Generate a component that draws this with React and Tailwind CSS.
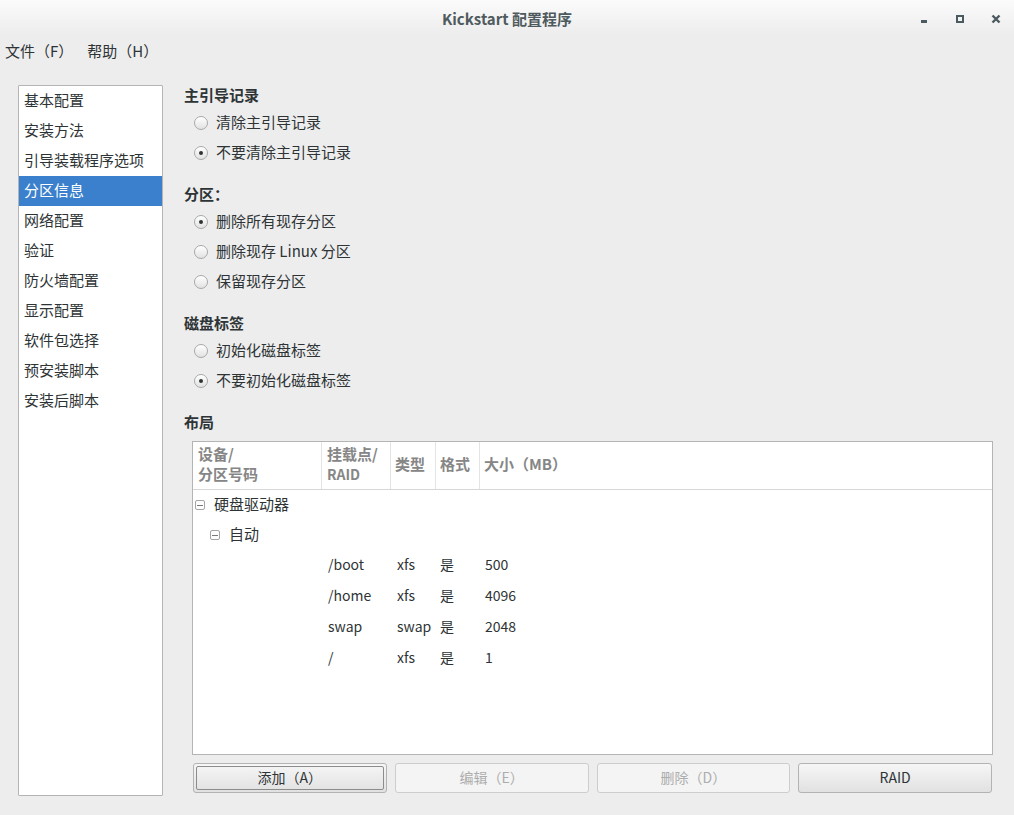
import React from 'react';

const cjk = { fontFamily: '"Noto Sans CJK SC", "Noto Sans", sans-serif' };

const navItems = [
  '基本配置',
  '安装方法',
  '引导装载程序选项',
  '分区信息',
  '网络配置',
  '验证',
  '防火墙配置',
  '显示配置',
  '软件包选择',
  '预安装脚本',
  '安装后脚本',
];

const partitions = [
  { mount: '/boot', type: 'xfs', format: '是', size: '500' },
  { mount: '/home', type: 'xfs', format: '是', size: '4096' },
  { mount: 'swap', type: 'swap', format: '是', size: '2048' },
  { mount: '/', type: 'xfs', format: '是', size: '1' },
];

function Radio({ checked, label }) {
  return (
    <div className="h-[30px] flex items-center pl-[10px]">
      <span className="w-[14px] h-[14px] rounded-full border border-[#a8a8a8] bg-gradient-to-b from-white to-[#e2e2e2] flex items-center justify-center shadow-[inset_0_1px_0_#fff]">
        {checked && <span className="w-[4px] h-[4px] rounded-full bg-[#2e3436]" />}
      </span>
      <span className="ml-[8px] pb-[4px] text-[15px] leading-none text-[#2e3436]">{label}</span>
    </div>
  );
}

function Heading({ children, className = '' }) {
  return (
    <div className={`h-[23px] pb-[4px] flex items-center text-[15px] font-bold leading-none text-[#2e3436] ${className}`}>
      {children}
    </div>
  );
}

function Expander() {
  return (
    <span className="w-[10px] h-[10px] border border-[#a6a6a6] rounded-[2px] flex items-center justify-center bg-white">
      <span className="w-[6px] h-px bg-[#7a7a7a]" />
    </span>
  );
}

function Button({ children, disabled, focused }) {
  return (
    <div
      className={`h-[30px] rounded-[3px] border flex items-center justify-center p-[2px] ${
        disabled
          ? 'border-[#cdcdcd] bg-[#f4f4f4] text-[#adadad]'
          : 'border-[#b3b3b3] bg-gradient-to-b from-[#f6f6f6] to-[#e1e1e1] text-[#2e3436]'
      }`}
    >
      <div
        className={`w-full h-full flex items-center justify-center pb-[3px] text-[14px] leading-none ${
          focused ? 'border border-[#8c8c8c] rounded-[2px]' : ''
        }`}
      >
        {children}
      </div>
    </div>
  );
}

export default function App() {
  return (
    <div className="w-[1014px] h-[815px] bg-[#ededed] flex flex-col overflow-hidden" style={cjk}>
      {/* Title bar */}
      <div className="h-[37px] shrink-0 bg-gradient-to-b from-[#fbfbfb] to-[#ececec] relative flex items-center justify-center">
        <span className="text-[15px] font-bold text-[#4f5a5e] leading-none">Kickstart 配置程序</span>
        <div className="absolute right-0 top-0 h-full flex items-center">
          <div className="w-[36px] h-full flex items-center justify-center">
            <span className="w-[6px] h-[3px] bg-[#4b5a61] mt-[6px]" />
          </div>
          <div className="w-[36px] h-full flex items-center justify-center">
            <span className="w-[8px] h-[8px] border-2 border-[#4b5a61]" />
          </div>
          <div className="w-[36px] h-full flex items-center justify-center">
            <svg width="10" height="10" viewBox="0 0 10 10">
              <path d="M1.5 1.5 L8.5 8.5 M8.5 1.5 L1.5 8.5" stroke="#4b5a61" strokeWidth="2.4" />
            </svg>
          </div>
        </div>
      </div>

      {/* Menu bar */}
      <div className="h-[30px] shrink-0 pb-[4px] flex items-center text-[15px] leading-none text-[#2e3436]">
        <span className="pl-[5px]">文件（F）</span>
        <span className="ml-[14px]">帮助（H）</span>
      </div>

      {/* Body */}
      <div className="flex flex-1 pt-[18px] pb-[19px] pl-[18px] pr-[21px]">
        {/* Sidebar */}
        <div className="w-[145px] shrink-0 bg-white border border-[#b4b4b4] rounded-[1px] flex flex-col">
          {navItems.map((item) => (
            <div
              key={item}
              className={`h-[30px] shrink-0 flex items-center pl-[5px] pb-[4px] text-[15px] leading-none ${
                item === '分区信息' ? 'bg-[#3b80cc] text-white' : 'text-[#2e3436]'
              }`}
            >
              {item}
            </div>
          ))}
        </div>

        {/* Content */}
        <div className="flex-1 ml-[21px] flex flex-col">
          <Heading>主引导记录</Heading>
          <Radio label="清除主引导记录" />
          <Radio checked label="不要清除主引导记录" />

          <Heading className="mt-[16px]">分区：</Heading>
          <Radio checked label="删除所有现存分区" />
          <Radio label="删除现存 Linux 分区" />
          <Radio label="保留现存分区" />

          <Heading className="mt-[16px]">磁盘标签</Heading>
          <Radio label="初始化磁盘标签" />
          <Radio checked label="不要初始化磁盘标签" />

          <Heading className="mt-[16px]">布局</Heading>

          {/* Partition table */}
          <div className="mt-[6px] ml-[8px] h-[314px] bg-white border border-[#b4b4b4] flex flex-col">
            <div className="h-[48px] shrink-0 flex border-b border-[#d6d6d6] text-[15px] font-bold text-[#868686] leading-[20px]">
              <div className="w-[129px] border-r border-[#e4e4e4] pl-[5px] pb-[3px] flex flex-col justify-center">
                <span>设备/</span>
                <span>分区号码</span>
              </div>
              <div className="w-[69px] border-r border-[#e4e4e4] pl-[5px] pb-[3px] flex flex-col justify-center">
                <span>挂载点/</span>
                <span className="text-[14px]">RAID</span>
              </div>
              <div className="w-[45px] border-r border-[#e4e4e4] pl-[4px] pb-[3px] flex items-center">类型</div>
              <div className="w-[44px] border-r border-[#e4e4e4] pl-[4px] pb-[3px] flex items-center">格式</div>
              <div className="flex-1 pl-[4px] pb-[3px] flex items-center">大小（MB）</div>
            </div>

            <div className="h-[30px] flex items-center pl-[2px] text-[15px] leading-none text-[#2e3436]">
              <Expander />
              <span className="ml-[9px] pb-[4px]">硬盘驱动器</span>
            </div>
            <div className="h-[30px] flex items-center pl-[17px] text-[15px] leading-none text-[#2e3436]">
              <Expander />
              <span className="ml-[9px] pb-[4px]">自动</span>
            </div>
            {partitions.map((p) => (
              <div key={p.mount} className="h-[31px] pb-[4px] flex items-center text-[14px] leading-none text-[#2e3436]">
                <div className="w-[129px]" />
                <div className="w-[69px] pl-[6px]">{p.mount}</div>
                <div className="w-[45px] pl-[6px]">{p.type}</div>
                <div className="w-[44px] pl-[4px]">{p.format}</div>
                <div className="flex-1 pl-[5px]">{p.size}</div>
              </div>
            ))}
          </div>

          {/* Buttons */}
          <div className="mt-[8px] ml-[9px] mr-px grid grid-cols-4 gap-[8px]">
            <Button focused>添加（A）</Button>
            <Button disabled>编辑（E）</Button>
            <Button disabled>删除（D）</Button>
            <Button>RAID</Button>
          </div>
        </div>
      </div>
    </div>
  );
}
